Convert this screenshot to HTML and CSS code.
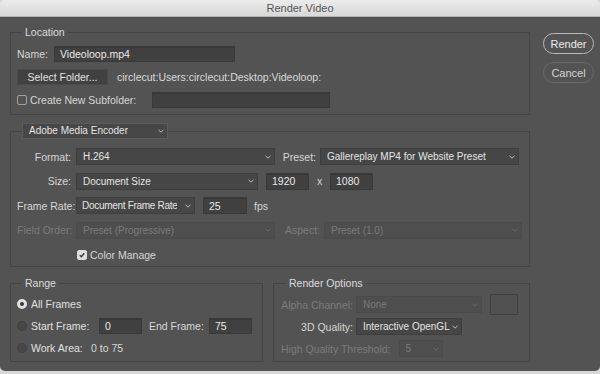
FILE: index.html
```html
<!DOCTYPE html>
<html lang="en">
<head>
    <meta charset="UTF-8">
    <meta name="viewport" content="width=device-width, initial-scale=1.0">
    <title>Render Video</title>
    <link rel="stylesheet" href="styles.css">
</head>
<body>
    <div class="titlebar">Render Video</div>

    <div class="window">
        <div class="main">

            <!-- Location -->
            <fieldset class="group location">
                <legend>Location</legend>
                <div class="row">
                    <span class="name-label">Name:</span>
                    <div class="input name-input">Videoloop.mp4</div>
                </div>
                <div class="row">
                    <div class="button folder-btn">Select Folder...</div>
                    <span class="path">circlecut:Users:circlecut:Desktop:Videoloop:</span>
                </div>
                <div class="row">
                    <span class="check"></span>
                    <span class="check-text">Create New Subfolder:</span>
                    <div class="input sub-input"></div>
                </div>
            </fieldset>

            <!-- Encoder -->
            <fieldset class="group encoder">
                <legend>
                    <div class="select legend-select">
                        <span>Adobe Media Encoder</span>
                        <svg class="chev" viewBox="0 0 6 4"><polyline points="0.5,0.8 3,3.2 5.5,0.8"/></svg>
                    </div>
                </legend>
                <div class="row tall">
                    <span class="label">Format:</span>
                    <div class="select w199">
                        <span>H.264</span>
                        <svg class="chev" viewBox="0 0 6 4"><polyline points="0.5,0.8 3,3.2 5.5,0.8"/></svg>
                    </div>
                    <span class="label preset-label">Preset:</span>
                    <div class="select w199">
                        <span>Gallereplay MP4 for Website Preset</span>
                        <svg class="chev" viewBox="0 0 6 4"><polyline points="0.5,0.8 3,3.2 5.5,0.8"/></svg>
                    </div>
                </div>
                <div class="row tall">
                    <span class="label">Size:</span>
                    <div class="select w182">
                        <span>Document Size</span>
                        <svg class="chev" viewBox="0 0 6 4"><polyline points="0.5,0.8 3,3.2 5.5,0.8"/></svg>
                    </div>
                    <div class="input num gap8">1920</div>
                    <span class="times">x</span>
                    <div class="input num">1080</div>
                </div>
                <div class="row tall">
                    <span class="label">Frame Rate:</span>
                    <div class="select w119 tight">
                        <span>Document Frame Rate</span>
                        <svg class="chev" viewBox="0 0 6 4"><polyline points="0.5,0.8 3,3.2 5.5,0.8"/></svg>
                    </div>
                    <div class="input num fps-input">25</div>
                    <span class="fps">fps</span>
                </div>
                <div class="row tall">
                    <span class="label disabled">Field Order:</span>
                    <div class="select w199 off">
                        <span>Preset (Progressive)</span>
                        <svg class="chev" viewBox="0 0 6 4"><polyline points="0.5,0.8 3,3.2 5.5,0.8"/></svg>
                    </div>
                    <span class="label aspect-label disabled">Aspect:</span>
                    <div class="select w198 off">
                        <span>Preset (1.0)</span>
                        <svg class="chev" viewBox="0 0 6 4"><polyline points="0.5,0.8 3,3.2 5.5,0.8"/></svg>
                    </div>
                </div>
                <div class="row tall color-row">
                    <span class="check on">
                        <svg viewBox="0 0 10 10"><polyline points="2.2,5.2 4.2,7.2 7.8,2.8"/></svg>
                    </span>
                    <span class="check-text">Color Manage</span>
                </div>
            </fieldset>

            <div class="bottom">
                <!-- Range -->
                <fieldset class="group range">
                    <legend>Range</legend>
                    <div class="row">
                        <span class="radio on"></span>
                        <span class="radio-text">All Frames</span>
                    </div>
                    <div class="row">
                        <span class="radio"></span>
                        <span class="radio-text start-label">Start Frame:</span>
                        <div class="input frame-input">0</div>
                        <span class="end-label">End Frame:</span>
                        <div class="input frame-input">75</div>
                    </div>
                    <div class="row">
                        <span class="radio"></span>
                        <span class="radio-text work-label">Work Area:</span>
                        <span>0 to 75</span>
                    </div>
                </fieldset>

                <!-- Render Options -->
                <fieldset class="group options">
                    <legend>Render Options</legend>
                    <div class="row tall">
                        <span class="opt-label disabled">Alpha Channel:</span>
                        <div class="select w126 off">
                            <span>None</span>
                            <svg class="chev" viewBox="0 0 6 4"><polyline points="0.5,0.8 3,3.2 5.5,0.8"/></svg>
                        </div>
                        <div class="swatch"></div>
                    </div>
                    <div class="row tall">
                        <span class="opt-label">3D Quality:</span>
                        <div class="select w106">
                            <span>Interactive OpenGL</span>
                            <svg class="chev" viewBox="0 0 6 4"><polyline points="0.5,0.8 3,3.2 5.5,0.8"/></svg>
                        </div>
                    </div>
                    <div class="row tall">
                        <span class="disabled">High Quality Threshold:</span>
                        <div class="select w44 off hq">
                            <span>5</span>
                            <svg class="chev" viewBox="0 0 6 4"><polyline points="0.5,0.8 3,3.2 5.5,0.8"/></svg>
                        </div>
                    </div>
                </fieldset>
            </div>
        </div>

        <div class="actions">
            <div class="pill render">Render</div>
            <div class="pill cancel">Cancel</div>
        </div>
    </div>
</body>
</html>
```

FILE: styles.css
```css
body {
    margin: 0;
    width: 600px;
    height: 374px;
    overflow: hidden;
    background-color: #d9d9d9;
    font-family: "Liberation Sans", Arial, sans-serif;
    font-size: 10.5px;
    color: #d6d6d6;
}

/* Заголовок окна */
.titlebar {
    height: 17px;
    line-height: 17px;
    text-align: center;
    font-size: 11px;
    color: #555;
    background: linear-gradient(#ececec, #d8d8d8);
    border-bottom: 1px solid #b5b5b5;
    box-sizing: border-box;
    border-radius: 5px 5px 0 0;
}

.window {
    display: flex;
    gap: 13px;
    height: 354px;
    padding: 9px 0 0 10px;
    box-sizing: border-box;
    background-color: #535353;
    border-radius: 0 0 5px 5px;
}

.main {
    width: 520px;
    display: flex;
    flex-direction: column;
}

/* Группы */
.group {
    margin: 0;
    min-width: 0;
    border: 1px solid #444;
    display: flex;
    flex-direction: column;
}

.group legend {
    padding: 0 3px;
    margin-left: 5px;
    line-height: 12px;
    color: #dcdcdc;
}

.location {
    padding: 8px 6px 6px 6px;
    gap: 7px;
}

.encoder {
    margin-top: 8px;
    padding: 9px 6px 3px 6px;
    gap: 7.5px;
}

.encoder legend {
    padding: 0;
}

.bottom {
    display: flex;
    gap: 10px;
    margin-top: 10px;
}

.range {
    width: 253px;
    box-sizing: border-box;
    padding: 7px 6px 5px 6px;
    gap: 6px;
}

.options {
    width: 257px;
    box-sizing: border-box;
    padding: 7px 6px 4px 7px;
    gap: 5px;
}

.row {
    display: flex;
    align-items: center;
    height: 16px;
    white-space: nowrap;
}

.row.tall {
    height: 17px;
}

/* Поля и списки */
.input {
    height: 100%;
    box-sizing: border-box;
    background-color: #404040;
    border: 1px solid #393939;
    box-shadow: inset 0 1px 0 #373737;
    color: #e8e8e8;
    padding: 0 5px;
    display: flex;
    align-items: center;
}

.select {
    height: 100%;
    box-sizing: border-box;
    background-color: #464646;
    border: 1px solid #3e3e3e;
    color: #e4e4e4;
    font-size: 10px;
    padding: 0 3px 0 6px;
    display: flex;
    align-items: center;
    justify-content: space-between;
    overflow: hidden;
}

.select span {
    overflow: hidden;
}

.select.tight {
    padding-left: 5px;
    letter-spacing: -0.3px;
}

.chev {
    width: 6px;
    height: 4px;
    flex: none;
    margin-left: 2px;
}

.chev polyline {
    fill: none;
    stroke: #bdbdbd;
    stroke-width: 1;
}

.select.off {
    background-color: #4e4e4e;
    border-color: #4a4a4a;
    color: #7b7b7b;
}

.select.off .chev polyline {
    stroke: #6c6c6c;
}

.legend-select {
    width: 146px;
    height: 16px;
    border-color: #5c5c5c;
    background-color: #474747;
}

.w199 { width: 199px; }
.w198 { width: 198px; }
.w182 { width: 182px; }
.w119 { width: 119px; }
.w126 { width: 126px; }
.w106 { width: 106px; }
.w44 { width: 44px; }

.disabled {
    color: #7b7b7b;
}

/* Location */
.name-label {
    width: 37px;
}

.name-input {
    width: 181px;
}

.button {
    height: 100%;
    box-sizing: border-box;
    background-color: #414141;
    border: 1px solid #4a4a4a;
    color: #e2e2e2;
    display: flex;
    align-items: center;
    justify-content: center;
}

.folder-btn {
    width: 91px;
}

.path {
    margin-left: 9px;
    color: #d9d9d9;
}

.check {
    width: 10px;
    height: 10px;
    box-sizing: border-box;
    border: 1px solid #a0a0a0;
    border-radius: 2px;
    flex: none;
    display: flex;
}

.check.on {
    background-color: #dedede;
    border-color: #dedede;
}

.check svg {
    width: 100%;
    height: 100%;
}

.check polyline {
    fill: none;
    stroke: #3a3a3a;
    stroke-width: 1.8;
}

.check-text {
    margin-left: 3px;
}

.sub-input {
    width: 178px;
    margin-left: 16px;
}

/* Encoder */
.label {
    width: 54px;
    margin-right: 5px;
    text-align: right;
    flex: none;
}

.preset-label {
    width: 41px;
    margin-right: 4px;
}

.aspect-label {
    width: 45px;
    margin-right: 4px;
}

.num {
    width: 43px;
}

.gap8 {
    margin-left: 8px;
}

.times {
    width: 21px;
    text-align: center;
}

.fps-input {
    width: 44px;
    margin-left: 8px;
}

.fps {
    margin-left: 7px;
}

.color-row {
    padding-left: 60px;
}

/* Range */
.radio {
    width: 10px;
    height: 10px;
    box-sizing: border-box;
    border-radius: 50%;
    background-color: #474747;
    border: 1px solid #404040;
    flex: none;
}

.radio.on {
    background-color: #333;
    border: 3px solid #e0e0e0;
}

.radio-text {
    margin-left: 4px;
    color: #e0e0e0;
}

.start-label {
    width: 68px;
}

.frame-input {
    width: 43px;
}

.end-label {
    margin-left: 7px;
    width: 60px;
}

.work-label {
    width: 60px;
}

/* Render Options */
.opt-label {
    width: 72px;
    margin-right: 3px;
    text-align: right;
    flex: none;
}

.swatch {
    width: 28px;
    height: 21px;
    box-sizing: border-box;
    margin-left: 8px;
    border: 1px solid #3f3f3f;
    background-color: #515151;
    flex: none;
}

.hq {
    margin-left: 8px;
}

/* Кнопки справа */
.actions {
    display: flex;
    flex-direction: column;
    gap: 8px;
    padding-top: 7px;
}

.pill {
    width: 51px;
    height: 21px;
    box-sizing: border-box;
    border-radius: 11px;
    display: flex;
    align-items: center;
    justify-content: center;
    font-size: 11px;
}

.render {
    border: 1.5px solid #b9b9b9;
    color: #ececec;
}

.cancel {
    border: 1.5px solid #6b6b6b;
    color: #d4d4d4;
}
```
